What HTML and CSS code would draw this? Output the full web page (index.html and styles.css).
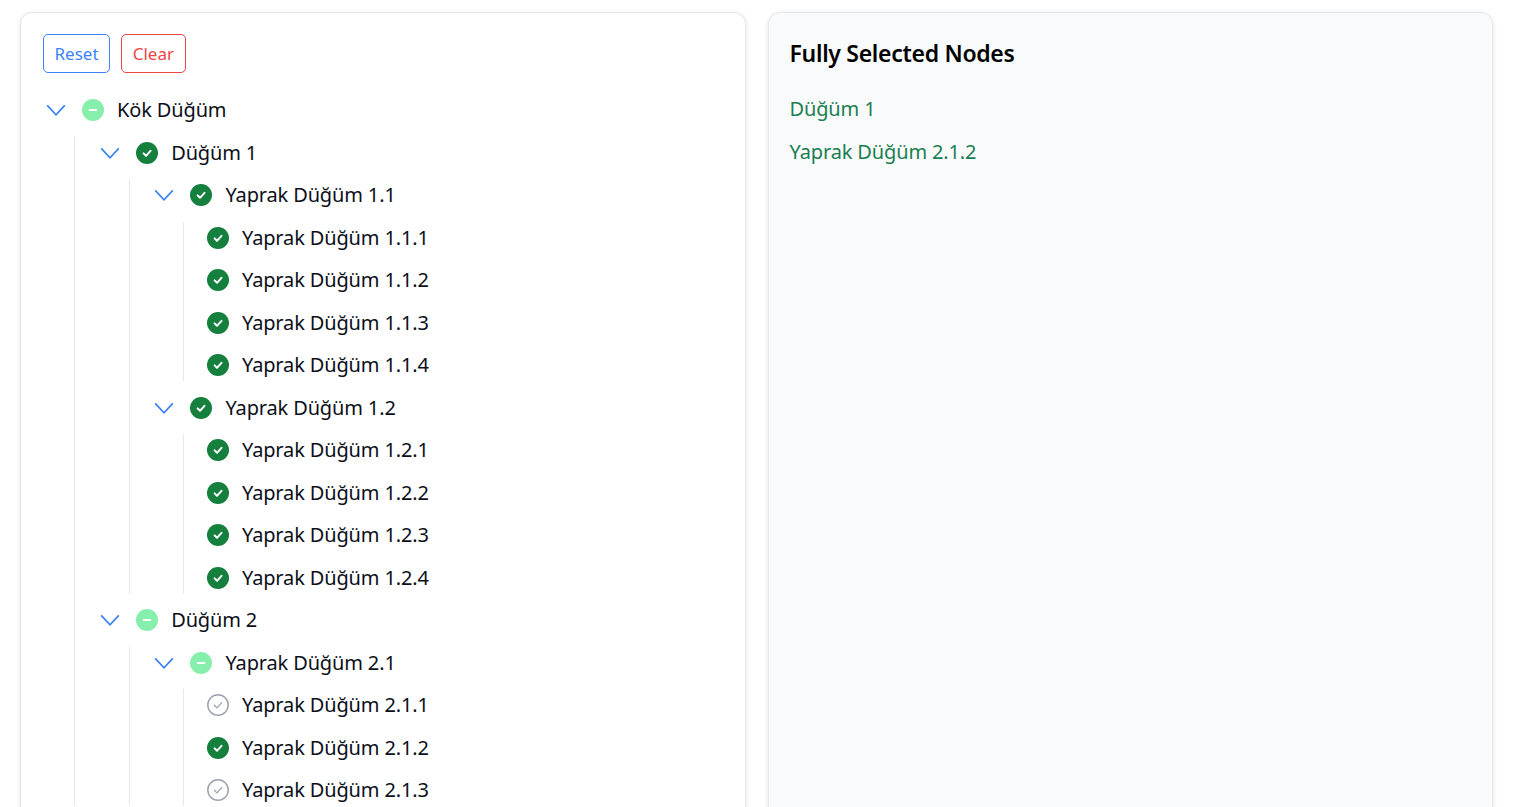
FILE: index.html
```html
<!DOCTYPE html>
<html lang="tr">
<head>
<meta charset="utf-8">
<title>Tree</title>
<link rel="stylesheet" href="styles.css">
</head>
<body>
<svg class="defs" width="0" height="0" aria-hidden="true">
  <symbol id="chev" viewBox="0 0 20 20"><path d="M1.2 5.3 10 14.8 18.8 5.3" fill="none" stroke="#3b82f6" stroke-width="1.7"/></symbol>
  <symbol id="full" viewBox="0 0 22 22"><circle cx="11" cy="11" r="11" fill="#15803d"/><path d="M7.6 11.4 10 13.8 14.5 8.8" fill="none" stroke="#fff" stroke-width="2" stroke-linecap="round" stroke-linejoin="round"/></symbol>
  <symbol id="part" viewBox="0 0 22 22"><circle cx="11" cy="11" r="11" fill="#86efac"/><path d="M7.6 11H14.4" fill="none" stroke="#fff" stroke-width="1.8" stroke-linecap="round"/></symbol>
  <symbol id="none" viewBox="0 0 22 22"><circle cx="11" cy="11" r="10.2" fill="none" stroke="#9ca3af" stroke-width="1.5"/><path d="M7.3 11.3 9.9 13.9 14.8 8.6" fill="none" stroke="#9ca3af" stroke-width="1.3" stroke-linecap="round" stroke-linejoin="round"/></symbol>
</svg>
<main class="layout">
  <section class="card">
    <div class="actions">
      <button class="btn btn-blue" type="button">Reset</button>
      <button class="btn btn-red" type="button">Clear</button>
    </div>
    <div class="tree">
      <div class="row"><svg class="chev"><use href="#chev"/></svg><svg class="ico"><use href="#part"/></svg><span>Kök Düğüm</span></div>
      <div class="kids">
        <div class="row"><svg class="chev"><use href="#chev"/></svg><svg class="ico"><use href="#full"/></svg><span>Düğüm 1</span></div>
        <div class="kids">
          <div class="row"><svg class="chev"><use href="#chev"/></svg><svg class="ico"><use href="#full"/></svg><span>Yaprak Düğüm 1.1</span></div>
          <div class="kids">
            <div class="row leaf"><svg class="ico"><use href="#full"/></svg><span>Yaprak Düğüm 1.1.1</span></div>
            <div class="row leaf"><svg class="ico"><use href="#full"/></svg><span>Yaprak Düğüm 1.1.2</span></div>
            <div class="row leaf"><svg class="ico"><use href="#full"/></svg><span>Yaprak Düğüm 1.1.3</span></div>
            <div class="row leaf"><svg class="ico"><use href="#full"/></svg><span>Yaprak Düğüm 1.1.4</span></div>
          </div>
          <div class="row"><svg class="chev"><use href="#chev"/></svg><svg class="ico"><use href="#full"/></svg><span>Yaprak Düğüm 1.2</span></div>
          <div class="kids">
            <div class="row leaf"><svg class="ico"><use href="#full"/></svg><span>Yaprak Düğüm 1.2.1</span></div>
            <div class="row leaf"><svg class="ico"><use href="#full"/></svg><span>Yaprak Düğüm 1.2.2</span></div>
            <div class="row leaf"><svg class="ico"><use href="#full"/></svg><span>Yaprak Düğüm 1.2.3</span></div>
            <div class="row leaf"><svg class="ico"><use href="#full"/></svg><span>Yaprak Düğüm 1.2.4</span></div>
          </div>
        </div>
        <div class="row"><svg class="chev"><use href="#chev"/></svg><svg class="ico"><use href="#part"/></svg><span>Düğüm 2</span></div>
        <div class="kids">
          <div class="row"><svg class="chev"><use href="#chev"/></svg><svg class="ico"><use href="#part"/></svg><span>Yaprak Düğüm 2.1</span></div>
          <div class="kids">
            <div class="row leaf"><svg class="ico"><use href="#none"/></svg><span>Yaprak Düğüm 2.1.1</span></div>
            <div class="row leaf"><svg class="ico"><use href="#full"/></svg><span>Yaprak Düğüm 2.1.2</span></div>
            <div class="row leaf"><svg class="ico"><use href="#none"/></svg><span>Yaprak Düğüm 2.1.3</span></div>
          </div>
        </div>
      </div>
    </div>
  </section>
  <section class="card card-muted">
    <h2 class="title">Fully Selected Nodes</h2>
    <ul class="selected">
      <li>Düğüm 1</li>
      <li>Yaprak Düğüm 2.1.2</li>
    </ul>
  </section>
</main>
</body>
</html>
```
FILE: styles.css
```css
* { box-sizing: border-box; }
html, body { margin: 0; height: 100%; overflow: hidden; background: #fff; }
body { font-family: "Noto Sans", sans-serif; font-size: 20px; letter-spacing: -0.14px; color: #0b0f19; }
.defs { position: absolute; }
.layout {
  display: grid;
  grid-template-columns: 1fr 1fr;
  column-gap: 22px;
  padding: 12px 30px 0 20px;
}
.card {
  min-height: 1100px;
  padding: 21px 22px;
  background: #fff;
  border: 1px solid #e5e7eb;
  border-radius: 12px;
  box-shadow: 0 1px 5px rgba(0, 0, 0, 0.1);
}
.card-muted { background: #f9fafb; padding-left: 21px; }
.actions { display: flex; gap: 10.5px; margin-bottom: 21px; }
.btn {
  height: 39px;
  padding: 0 10.5px;
  background: transparent;
  border: 1px solid;
  border-radius: 5px;
  font: inherit;
  font-size: 17px;
  letter-spacing: 0;
}
.btn-blue { color: #3b82f6; border-color: #3b82f6; }
.btn-red { color: #ef4444; border-color: #ef4444; padding: 0 11.2px; }
.tree, .kids { display: flex; flex-direction: column; gap: 10.5px; }
.kids {
  margin-left: 31.4px;
  padding-left: 21.8px;
  border-left: 1px solid #e5e7eb;
}
.row { display: flex; align-items: center; height: 32px; }
.row span { line-height: 32px; }
.chev { width: 20px; height: 20px; margin-left: 3px; margin-right: 16px; flex: none; }
.ico { width: 22px; height: 22px; margin-right: 13px; flex: none; }
.leaf { padding-left: 1.4px; }
.title {
  margin: 0 0 21px;
  font-size: 23px;
  line-height: 38px;
  font-weight: 600;
  letter-spacing: -0.3px;
  color: #000;
}
.selected {
  display: flex;
  flex-direction: column;
  gap: 10.5px;
  margin: 0;
  padding: 0;
  list-style: none;
  color: #1a7f50;
  line-height: 32px;
}
```
